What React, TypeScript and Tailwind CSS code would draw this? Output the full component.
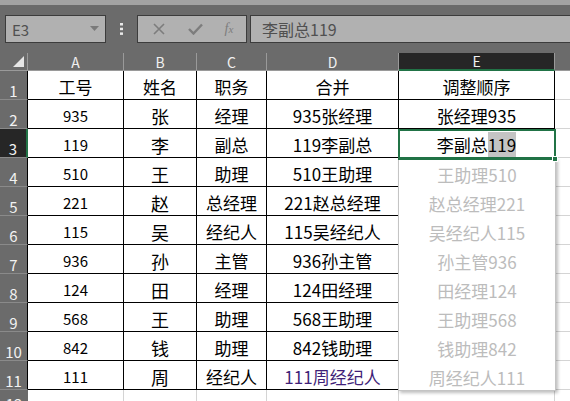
import React from "react";

const colW = [96, 73, 70, 132, 156];
const colLetters = ["A", "B", "C", "D", "E"];
const rows: string[][] = [
  ["工号", "姓名", "职务", "合并", "调整顺序"],
  ["935", "张", "经理", "935张经理", "张经理935"],
  ["119", "李", "副总", "119李副总", "李副总119"],
  ["510", "王", "助理", "510王助理", "王助理510"],
  ["221", "赵", "总经理", "221赵总经理", "赵总经理221"],
  ["115", "吴", "经纪人", "115吴经纪人", "吴经纪人115"],
  ["936", "孙", "主管", "936孙主管", "孙主管936"],
  ["124", "田", "经理", "124田经理", "田经理124"],
  ["568", "王", "助理", "568王助理", "王助理568"],
  ["842", "钱", "助理", "842钱助理", "钱助理842"],
  ["111", "周", "经纪人", "111周经纪人", "周经纪人111"],
];

function Cell({ r, c, text }: { r: number; c: number; text: string }) {
  const flash = c === 4 && r >= 3;
  const active = c === 4 && r === 2;
  let border = "border-r border-b border-black";
  if (flash) border = "";
  if (active) border = "border-r border-b border-[#217346]";
  let size = "text-[17px]";
  if (c === 0 && r > 0) size = "text-[15px]";
  if (c === 1 && r > 0) size = "text-[18px]";
  let color = "text-black";
  if (flash) color = "text-[#bcbcbc]";
  if (c === 3 && r === 10) color = "text-[#3f1f78]";
  return (
    <div
      style={{ width: colW[c] }}
      className={`h-[29px] shrink-0 flex items-center justify-center pt-[3px] leading-none ${border} ${size} ${color}`}
    >
      {active ? (
        <span>
          李副总<span className="bg-[#c4c4c4]">119</span>
        </span>
      ) : (
        <span>{text}</span>
      )}
    </div>
  );
}

export default function App() {
  return (
    <div className="relative w-[570px] h-[401px] overflow-hidden bg-white font-['Noto_Sans_CJK_SC',sans-serif]">
      {/* top strip */}
      <div className="h-[5px] bg-[#a3a3a3]" />
      {/* formula bar */}
      <div className="h-[48px] bg-[#6b6b6b] pt-[10px]">
        <div className="flex h-[28px] items-stretch">
          <div className="ml-[5px] w-[101px] bg-[#b1b1b1] border border-[#3c3c3c] flex items-center justify-between pl-[6px] pr-[6px]">
            <span className="text-[15px] text-[#505050] leading-none">E3</span>
            <svg width="9" height="6" viewBox="0 0 9 6">
              <polygon points="0,0 9,0 4.5,5" fill="#7a7a7a" />
            </svg>
          </div>
          <div className="w-[31px] flex items-center justify-center">
            <svg width="3" height="12" viewBox="0 0 3 12">
              <rect x="0" y="0" width="3" height="2.5" fill="#e8e8e8" />
              <rect x="0" y="4.7" width="3" height="2.5" fill="#e8e8e8" />
              <rect x="0" y="9.4" width="3" height="2.5" fill="#e8e8e8" />
            </svg>
          </div>
          <div className="w-[110px] bg-[#b1b1b1] border border-[#3c3c3c] flex items-center">
            <div className="w-[36px] flex justify-center ml-[3px]">
              <svg width="12" height="12" viewBox="0 0 12 12">
                <path d="M1 1 L11 11 M11 1 L1 11" stroke="#7d7d7d" strokeWidth="1.6" />
              </svg>
            </div>
            <div className="w-[36px] flex justify-center">
              <svg width="15" height="12" viewBox="0 0 15 12">
                <path d="M1 6 L5.5 10.5 L14 1.5" stroke="#7d7d7d" strokeWidth="2.4" fill="none" />
              </svg>
            </div>
            <div className="w-[32px] flex justify-center">
              <span className="font-['Liberation_Serif',serif] italic text-[14px] text-[#7d7d7d] leading-none">
                f<span className="text-[11px]">x</span>
              </span>
            </div>
          </div>
          <div className="ml-[3px] flex-1 bg-[#b1b1b1] border border-r-0 border-[#3c3c3c] flex items-center pl-[11px]">
            <span className="text-[16px] text-[#505050] leading-none">李副总119</span>
          </div>
        </div>
      </div>
      {/* column header */}
      <div className="flex h-[18px] bg-[#6b6b6b]">
        <div className="w-[28px] h-[18px] shrink-0 border-r border-[#9a9a9a] border-b flex items-end justify-end pr-[3px] pb-[3px]">
          <svg width="11" height="11" viewBox="0 0 11 11">
            <polygon points="11,0 11,11 0,11" fill="#e6e6e6" />
          </svg>
        </div>
        {colLetters.map((l, i) => (
          <div
            key={l}
            style={{ width: colW[i] }}
            className={`h-[18px] shrink-0 flex items-end justify-center pb-[1px] text-[14px] leading-none ${
              i === 4
                ? "bg-[#262626] border-r border-[#9a9a9a] border-b-2 border-b-[#217346] text-[#f0f0f0]"
                : "border-r border-b border-[#9a9a9a] text-[#f0f0f0]"
            }`}
          >
            {l}
          </div>
        ))}
        <div className="flex-1 border-b border-[#9a9a9a]" />
      </div>
      {/* rows */}
      {rows.map((row, r) => (
        <div key={r} className="flex h-[29px]">
          <div
            className={`w-[28px] h-[29px] shrink-0 flex items-end justify-center pb-[1px] text-[15px] leading-none text-[#f2f2f2] border-b ${
              r === 2
                ? "bg-[#262626] border-b-[#8a8a8a] border-r-2 border-r-[#217346]"
                : "bg-[#6b6b6b] border-b-[#8a8a8a] border-r border-r-black"
            }`}
          >
            {r + 1}
          </div>
          {row.map((t, c) => (
            <Cell key={c} r={r} c={c} text={t} />
          ))}
          <div className="flex-1 h-[29px] border-b border-[#d4d4d4]" />
        </div>
      ))}
      {/* row 12 */}
      <div className="flex h-[12px]">
        <div className="w-[28px] shrink-0 bg-[#6b6b6b] flex justify-center text-[15px] leading-none text-[#f2f2f2] overflow-hidden pt-[6px]">
          12
        </div>
        {colW.map((w, i) => (
          <div key={i} style={{ width: w }} className="shrink-0 border-r border-[#d4d4d4]" />
        ))}
        <div className="flex-1" />
      </div>

      {/* flash fill preview box */}
      <div className="absolute left-[398px] top-[158px] w-[158px] h-[233px] border border-[#c4c4c4] shadow-[2px_2px_3px_rgba(0,0,0,0.25)] pointer-events-none" />
      {/* active cell */}
      <div className="absolute left-[398px] top-[129px] w-[158px] h-[31px] border-2 border-[#217346] pointer-events-none" />
      <div className="absolute left-[552px] top-[156px] w-[6px] h-[6px] bg-[#217346] border border-white pointer-events-none" />
    </div>
  );
}
